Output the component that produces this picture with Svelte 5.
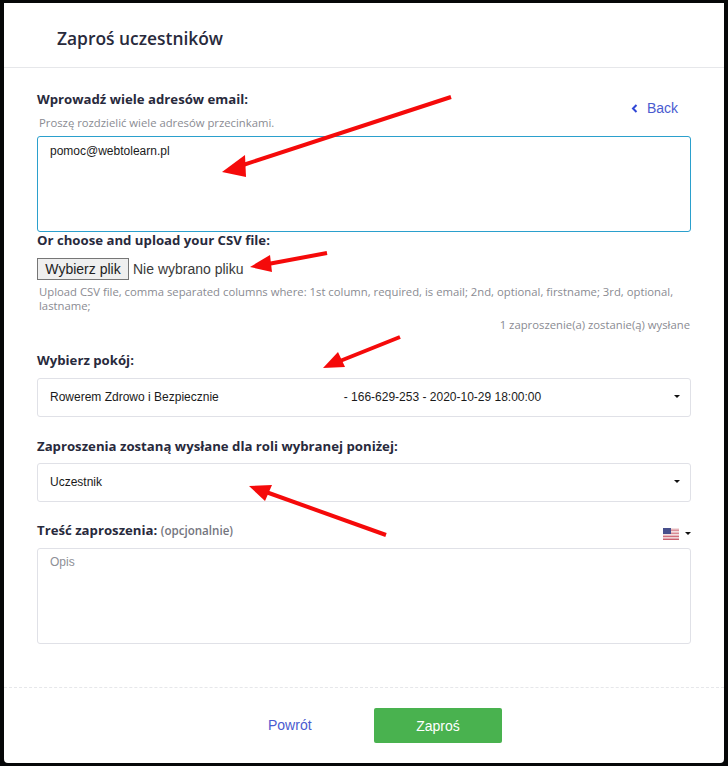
<script>
  const arrows = [
    { x1: 451, y1: 97, x2: 240, y2: 166, tip: '222,172 245,155 246,177' },
    { x1: 327, y1: 253, x2: 268, y2: 264, tip: '250,267 270,255 272,272' },
    { x1: 400, y1: 337, x2: 340, y2: 361, tip: '323,368 338,352 345,367' },
    { x1: 386, y1: 535, x2: 266, y2: 492, tip: '249,486 272,485 265,501' }
  ];
</script>

<div class="page">
  <div class="modal">
    <header class="head">
      <h1>Zaproś uczestników</h1>
    </header>

    <div class="body">
      <div class="top-row">
        <div>
          <div class="label">Wprowadź wiele adresów email:</div>
          <div class="help first">Proszę rozdzielić wiele adresów przecinkami.</div>
        </div>
        <a class="back" href="#back">
          <svg width="7" height="9" viewBox="0 0 7 9"><path d="M5.5 1 2 4.5 5.5 8" fill="none" stroke="#3047d6" stroke-width="2"/></svg>
          <span>Back</span>
        </a>
      </div>
      <div class="box emails">pomoc@webtolearn.pl</div>

      <div class="label csv">Or choose and upload your CSV file:</div>
      <div class="file">
        <button class="file-btn">Wybierz plik</button>
        <span>Nie wybrano pliku</span>
      </div>
      <div class="help upload">Upload CSV file, comma separated columns where: 1st column, required, is email; 2nd, optional, firstname; 3rd, optional, lastname;</div>
      <div class="help count">1 zaproszenie(a) zostanie(ą) wysłane</div>

      <div class="label room">Wybierz pokój:</div>
      <div class="box select">
        <span>Rowerem Zdrowo i Bezpiecznie<span class="room-id">- 166-629-253 - 2020-10-29 18:00:00</span></span>
        <i class="caret"></i>
      </div>

      <div class="label role">Zaproszenia zostaną wysłane dla roli wybranej poniżej:</div>
      <div class="box select">
        <span>Uczestnik</span>
        <i class="caret"></i>
      </div>

      <div class="msg-row">
        <div class="label">Treść zaproszenia: <small>(opcjonalnie)</small></div>
        <div class="lang">
          <svg class="flag" width="16" height="12" viewBox="0 0 16 12">
            <rect width="16" height="12" fill="#f3dfe0"/>
            <rect y="1.5" width="16" height="1.4" fill="#d98a94"/>
            <rect y="4.6" width="16" height="1.4" fill="#d98a94"/>
            <rect y="7.7" width="16" height="1.4" fill="#d06f7c"/>
            <rect y="10.6" width="16" height="1.4" fill="#c9606e"/>
            <rect width="8" height="6" fill="#48508c"/>
          </svg>
          <i class="caret"></i>
        </div>
      </div>
      <div class="box message">Opis</div>
    </div>

    <footer class="foot">
      <a class="return" href="#return">Powrót</a>
      <button class="invite">Zaproś</button>
    </footer>
  </div>

  <svg class="arrows" width="728" height="766" viewBox="0 0 728 766">
    {#each arrows as a}
      <line x1={a.x1} y1={a.y1} x2={a.x2} y2={a.y2} stroke="#f50a0a" stroke-width="4"/>
      <polygon points={a.tip} fill="#f50a0a"/>
    {/each}
  </svg>
</div>

<style>
  :global(body) {
    margin: 0;
    background: #000;
  }

  .page {
    position: relative;
    width: 728px;
    height: 766px;
    padding: 3px 4px;
    box-sizing: border-box;
    background: #060708;
  }

  .modal {
    height: 760px;
    background: #fff;
    border-radius: 0 0 4px 4px;
    font-family: "Open Sans", sans-serif;
    color: #282a3c;
    display: flex;
    flex-direction: column;
  }

  .head {
    height: 65px;
    box-sizing: border-box;
    border-bottom: 1px solid #e6e7ea;
    padding-left: 53px;
    display: flex;
    align-items: center;
  }

  h1 {
    margin: 0;
    font-size: 17.4px;
    font-weight: 600;
    position: relative;
    top: 3px;
  }

  .body {
    padding: 22px 33px 0;
    flex: 1;
  }

  .label {
    font-size: 13.2px;
    font-weight: 700;
    line-height: 18px;
  }

  .label small {
    font-size: 11.6px;
    font-weight: 600;
    color: #74757e;
  }

  .help {
    font-size: 11.3px;
    line-height: 14px;
    color: #8a8b92;
    padding-left: 2px;
  }

  .help.first {
    margin-top: 8px;
  }

  .top-row {
    display: flex;
    justify-content: space-between;
    align-items: flex-start;
    height: 46px;
    padding-right: 13px;
  }

  .back {
    display: flex;
    align-items: center;
    gap: 9px;
    color: #4a5bd0;
    font: 14px "Liberation Sans", sans-serif;
    text-decoration: none;
    margin-top: 10px;
  }

  .box {
    box-sizing: border-box;
    border: 1px solid #e0e1e7;
    border-radius: 3px;
    font: 12px "Liberation Sans", sans-serif;
    color: #1a1a1a;
    padding-left: 12px;
  }

  .emails {
    height: 96px;
    border-color: #2ba0cd;
    padding-top: 7px;
    line-height: 14px;
  }

  .csv {
    margin-top: -1px;
  }

  .file {
    display: flex;
    align-items: center;
    gap: 4px;
    margin-top: 9px;
    font: 14px "Liberation Sans", sans-serif;
    color: #3a3a3a;
  }

  .file-btn {
    width: 92px;
    height: 22px;
    padding: 0;
    border: 1px solid #767676;
    border-radius: 0;
    background: #efefef;
    font: 14px "Liberation Sans", sans-serif;
    color: #222;
  }

  .upload {
    margin-top: 5px;
  }

  .count {
    text-align: right;
    margin-top: 5px;
    padding-right: 1px;
  }

  .room {
    margin-top: 19px;
  }

  .select {
    height: 39px;
    margin-top: 9px;
    display: flex;
    align-items: center;
    justify-content: space-between;
    padding-right: 10px;
    padding-bottom: 2px;
  }

  .room-id {
    margin-left: 125px;
  }

  .role {
    margin-top: 20px;
  }

  .role + .select {
    margin-top: 8px;
  }

  .caret {
    width: 0;
    height: 0;
    border-left: 3px solid transparent;
    border-right: 3px solid transparent;
    border-top: 3px solid #111;
  }

  .msg-row {
    display: flex;
    justify-content: space-between;
    align-items: center;
    margin-top: 19px;
    height: 18px;
  }

  .lang {
    display: flex;
    align-items: center;
    gap: 6px;
    margin-top: 7px;
  }

  .flag {
    display: block;
  }

  .message {
    height: 96px;
    margin-top: 9px;
    color: #8e8f96;
    padding-top: 6px;
    line-height: 14px;
  }

  .foot {
    height: 76px;
    box-sizing: border-box;
    border-top: 1px dashed #e6e7ea;
    display: flex;
    align-items: flex-start;
    padding: 20px 222px 0 264px;
    justify-content: space-between;
  }

  .return {
    font: 14px "Liberation Sans", sans-serif;
    color: #4a5bd0;
    text-decoration: none;
    line-height: 35px;
  }

  .invite {
    width: 128px;
    height: 35px;
    border: 0;
    border-radius: 2px;
    background: #49b24f;
    color: #fff;
    font: 14px "Liberation Sans", sans-serif;
    padding: 0;
  }

  .arrows {
    position: absolute;
    left: 0;
    top: 0;
    pointer-events: none;
  }
</style>
